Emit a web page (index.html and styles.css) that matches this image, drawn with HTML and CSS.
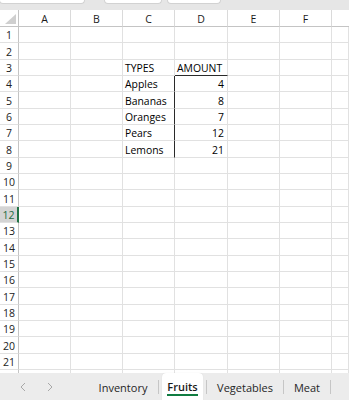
FILE: index.html
```html
<!DOCTYPE html>
<html>
<head>
<meta charset="utf-8">
<link rel="stylesheet" href="styles.css">
</head>
<body>
<div class="app">
  <div class="topbar">
    <div class="box box-name"></div>
    <div class="box box-mid"></div>
    <div class="box box-fx"></div>
  </div>
  <div class="sheet">
    <div class="corner"><span class="tri"></span></div>
    <div class="ch">A</div><div class="ch">B</div><div class="ch">C</div><div class="ch">D</div><div class="ch">E</div><div class="ch">F</div><div class="ch ch-last"></div>

    <div class="rh">1</div><div class="c"></div><div class="c"></div><div class="c"></div><div class="c"></div><div class="c"></div><div class="c"></div><div class="c"></div>
    <div class="rh">2</div><div class="c"></div><div class="c"></div><div class="c"></div><div class="c"></div><div class="c"></div><div class="c"></div><div class="c"></div>
    <div class="rh">3</div><div class="c"></div><div class="c"></div><div class="c">TYPES</div><div class="c head-d">AMOUNT</div><div class="c"></div><div class="c"></div><div class="c"></div>
    <div class="rh">4</div><div class="c"></div><div class="c"></div><div class="c edge">Apples</div><div class="c num">4</div><div class="c"></div><div class="c"></div><div class="c"></div>
    <div class="rh">5</div><div class="c"></div><div class="c"></div><div class="c edge">Bananas</div><div class="c num">8</div><div class="c"></div><div class="c"></div><div class="c"></div>
    <div class="rh">6</div><div class="c"></div><div class="c"></div><div class="c edge">Oranges</div><div class="c num">7</div><div class="c"></div><div class="c"></div><div class="c"></div>
    <div class="rh">7</div><div class="c"></div><div class="c"></div><div class="c edge">Pears</div><div class="c num">12</div><div class="c"></div><div class="c"></div><div class="c"></div>
    <div class="rh">8</div><div class="c"></div><div class="c"></div><div class="c edge">Lemons</div><div class="c num">21</div><div class="c"></div><div class="c"></div><div class="c"></div>
    <div class="rh">9</div><div class="c"></div><div class="c"></div><div class="c"></div><div class="c"></div><div class="c"></div><div class="c"></div><div class="c"></div>
    <div class="rh">10</div><div class="c"></div><div class="c"></div><div class="c"></div><div class="c"></div><div class="c"></div><div class="c"></div><div class="c"></div>
    <div class="rh">11</div><div class="c"></div><div class="c"></div><div class="c"></div><div class="c"></div><div class="c"></div><div class="c"></div><div class="c"></div>
    <div class="rh rh-active">12</div><div class="c"></div><div class="c"></div><div class="c"></div><div class="c"></div><div class="c"></div><div class="c"></div><div class="c"></div>
    <div class="rh">13</div><div class="c"></div><div class="c"></div><div class="c"></div><div class="c"></div><div class="c"></div><div class="c"></div><div class="c"></div>
    <div class="rh">14</div><div class="c"></div><div class="c"></div><div class="c"></div><div class="c"></div><div class="c"></div><div class="c"></div><div class="c"></div>
    <div class="rh">15</div><div class="c"></div><div class="c"></div><div class="c"></div><div class="c"></div><div class="c"></div><div class="c"></div><div class="c"></div>
    <div class="rh">16</div><div class="c"></div><div class="c"></div><div class="c"></div><div class="c"></div><div class="c"></div><div class="c"></div><div class="c"></div>
    <div class="rh">17</div><div class="c"></div><div class="c"></div><div class="c"></div><div class="c"></div><div class="c"></div><div class="c"></div><div class="c"></div>
    <div class="rh">18</div><div class="c"></div><div class="c"></div><div class="c"></div><div class="c"></div><div class="c"></div><div class="c"></div><div class="c"></div>
    <div class="rh">19</div><div class="c"></div><div class="c"></div><div class="c"></div><div class="c"></div><div class="c"></div><div class="c"></div><div class="c"></div>
    <div class="rh">20</div><div class="c"></div><div class="c"></div><div class="c"></div><div class="c"></div><div class="c"></div><div class="c"></div><div class="c"></div>
    <div class="rh">21</div><div class="c"></div><div class="c"></div><div class="c"></div><div class="c"></div><div class="c"></div><div class="c"></div><div class="c"></div>
    <div class="rh">22</div><div class="c"></div><div class="c"></div><div class="c"></div><div class="c"></div><div class="c"></div><div class="c"></div><div class="c"></div>
  </div>
  <div class="tabbar">
    <div class="nav">
      <svg class="arrow" width="6" height="10" viewBox="0 0 6 10"><path d="M5 1 L1 5 L5 9" fill="none" stroke="#a8a8a8" stroke-width="1"/></svg>
      <svg class="arrow" width="6" height="10" viewBox="0 0 6 10"><path d="M1 1 L5 5 L1 9" fill="none" stroke="#a8a8a8" stroke-width="1"/></svg>
    </div>
    <div class="tab tab-inv">Inventory</div>
    <div class="sep"></div>
    <div class="tab tab-fruits"><span class="active">Fruits</span></div>
    <div class="sep"></div>
    <div class="tab tab-veg">Vegetables</div>
    <div class="sep"></div>
    <div class="tab tab-meat">Meat</div>
    <div class="sep"></div>
  </div>
</div>
</body>
</html>
```

FILE: styles.css
```css
html, body {
  margin: 0;
  padding: 0;
  background: #ffffff;
}

.app {
  width: 349px;
  height: 400px;
  display: flex;
  flex-direction: column;
  overflow: hidden;
}

.topbar {
  height: 10px;
  flex: none;
  background: #e6e6e6;
  display: flex;
  align-items: flex-start;
}

.box {
  height: 3px;
  background: #ffffff;
  border: 1px solid #d2d2d2;
  border-top: none;
  border-radius: 0 0 4px 4px;
  box-sizing: content-box;
}

.box-name { width: 84px; margin-left: -1px; }
.box-mid { width: 56px; margin-left: 19px; }
.box-fx { width: 52px; margin-left: 5px; }

.sheet {
  height: 363px;
  flex: none;
  overflow: hidden;
  display: grid;
  grid-template-columns: 19px 52px 52px 52px 53px 52px 52px 1fr;
  grid-template-rows: 17px;
  grid-auto-rows: 16px 17px 16px;
  font-family: "Open Sans", "Noto Sans", sans-serif;
}

.corner {
  border-right: 1px solid #c4c4c4;
  border-bottom: 1px solid #c4c4c4;
  box-sizing: border-box;
  display: flex;
  align-items: flex-end;
  justify-content: flex-end;
  padding: 0 2px 2px 0;
  background: #ffffff;
}

.tri {
  width: 11px;
  height: 10px;
  background: #cfcfcf;
  clip-path: polygon(100% 0, 100% 100%, 0 100%);
}

.ch {
  border-right: 1px solid #dadada;
  border-bottom: 1px solid #c4c4c4;
  box-sizing: border-box;
  display: flex;
  align-items: center;
  justify-content: center;
  font-size: 10.5px;
  color: #1a1a1a;
  background: #ffffff;
  padding-top: 1px;
}

.ch-last { border-right: none; }

.rh {
  border-right: 1px solid #c4c4c4;
  border-bottom: 1px solid #e1e1e1;
  box-sizing: border-box;
  display: flex;
  align-items: center;
  justify-content: center;
  font-size: 10.5px;
  color: #222222;
  background: #ffffff;
  padding-top: 1px;
}

.rh-active {
  background: #d4d4d4;
  color: #1e6b40;
  border-right: 2px solid #217346;
}

.c {
  border-right: 1px solid #e1e1e1;
  border-bottom: 1px solid #e1e1e1;
  box-sizing: border-box;
  display: flex;
  align-items: center;
  padding: 1px 2px 0 2px;
  font-size: 10.4px;
  color: #000000;
  white-space: nowrap;
  overflow: hidden;
}

.num { justify-content: flex-end; padding-right: 3px; }
.head-d { border-bottom: 1px solid #2a2a2a; }
.edge { border-right: 1px solid #2a2a2a; }

.tabbar {
  flex: 1;
  background: #ececec;
  display: flex;
  align-items: stretch;
  font-family: "Open Sans", "Noto Sans", sans-serif;
  font-size: 11px;
  color: #262626;
}

.nav {
  width: 88px;
  display: flex;
  align-items: center;
  gap: 21px;
  padding-left: 20px;
  box-sizing: border-box;
}

.arrow { display: block; }

.tab {
  display: flex;
  align-items: center;
  justify-content: center;
  padding-top: 1px;
}

.tab-inv { width: 70px; }
.tab-veg { width: 76px; }
.tab-meat { width: 46px; }

.tab-fruits {
  width: 41px;
  margin: 0 3px;
  background: #ffffff;
  border-radius: 4px 4px 0 0;
  box-shadow: 0 0 1px rgba(0, 0, 0, 0.15);
}

.active {
  font-weight: 600;
  color: #1a1a1a;
  border-bottom: 2px solid #107c41;
  line-height: 14px;
  margin-top: 2px;
}

.sep {
  width: 1px;
  height: 14px;
  align-self: center;
  background: #c6c6c6;
}
```
